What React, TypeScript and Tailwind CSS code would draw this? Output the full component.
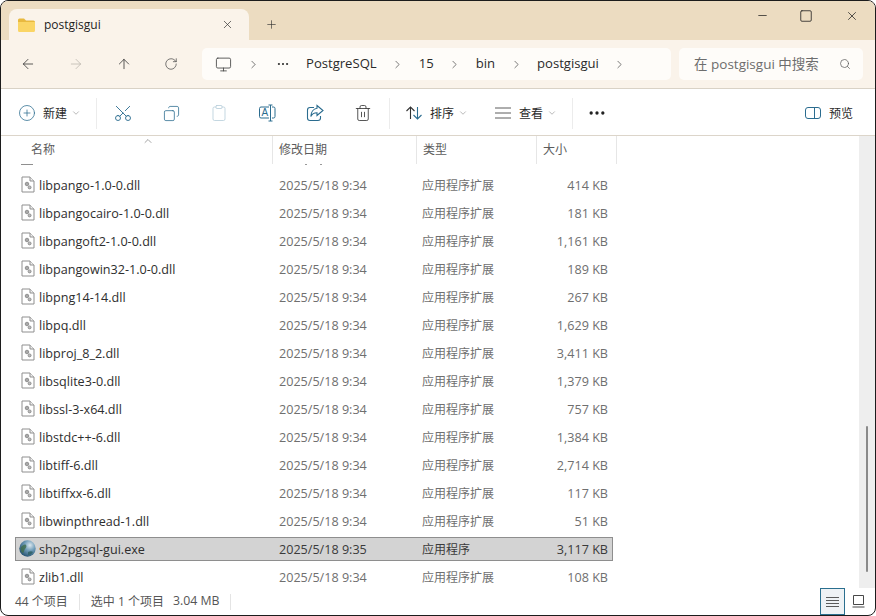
import {
  ArrowLeft,
  ArrowRight,
  ArrowUp,
  ChevronDown,
  ChevronRight,
  ChevronUp,
  CirclePlus,
  Clipboard,
  Copy,
  Ellipsis,
  Minus,
  Monitor,
  Plus,
  RotateCw,
  Scissors,
  Search,
  Square,
  Trash2,
  X,
} from "lucide-react";

const FONT = "font-['Open_Sans','Noto_Sans_CJK_SC',sans-serif]";

type FileRow = { name: string; date: string; type: string; size: string; selected?: boolean };

const d34 = "2025/5/18 9:34";
const ext = "应用程序扩展";

const files: FileRow[] = [
  { name: "libpango-1.0-0.dll", date: d34, type: ext, size: "414 KB" },
  { name: "libpangocairo-1.0-0.dll", date: d34, type: ext, size: "181 KB" },
  { name: "libpangoft2-1.0-0.dll", date: d34, type: ext, size: "1,161 KB" },
  { name: "libpangowin32-1.0-0.dll", date: d34, type: ext, size: "189 KB" },
  { name: "libpng14-14.dll", date: d34, type: ext, size: "267 KB" },
  { name: "libpq.dll", date: d34, type: ext, size: "1,629 KB" },
  { name: "libproj_8_2.dll", date: d34, type: ext, size: "3,411 KB" },
  { name: "libsqlite3-0.dll", date: d34, type: ext, size: "1,379 KB" },
  { name: "libssl-3-x64.dll", date: d34, type: ext, size: "757 KB" },
  { name: "libstdc++-6.dll", date: d34, type: ext, size: "1,384 KB" },
  { name: "libtiff-6.dll", date: d34, type: ext, size: "2,714 KB" },
  { name: "libtiffxx-6.dll", date: d34, type: ext, size: "117 KB" },
  { name: "libwinpthread-1.dll", date: d34, type: ext, size: "51 KB" },
  { name: "shp2pgsql-gui.exe", date: "2025/5/18 9:35", type: "应用程序", size: "3,117 KB", selected: true },
  { name: "zlib1.dll", date: d34, type: ext, size: "108 KB" },
];

function DllIcon() {
  return (
    <svg width="14" height="17" viewBox="0 0 14 17" fill="none" className="shrink-0">
      <path d="M1 1h8l4 4v11H1z" fill="#fff" stroke="#8f8f8f" />
      <path d="M9 1v4h4" fill="#eee" stroke="#8f8f8f" />
      <circle cx="6" cy="8" r="1.8" fill="#a9a9a9" stroke="#777" strokeWidth="0.7" />
      <circle cx="8.6" cy="11.4" r="1.5" fill="#bdbdbd" stroke="#777" strokeWidth="0.7" />
    </svg>
  );
}

function GlobeIcon() {
  return (
    <svg width="17" height="17" viewBox="0 0 17 17" className="shrink-0">
      <defs>
        <radialGradient id="globe" cx="0.65" cy="0.3" r="0.85">
          <stop offset="0" stopColor="#dbe7ee" />
          <stop offset="0.4" stopColor="#6f9cb8" />
          <stop offset="1" stopColor="#123f5f" />
        </radialGradient>
      </defs>
      <circle cx="8.5" cy="8.5" r="8.2" fill="url(#globe)" />
      <path d="M2 7c2-2 4-3 5-2s0 3-1 4-1 4-2 4-3-3-2-6z" fill="#3f6b4a" opacity="0.8" />
      <path d="M9 12c2-1 4-1 5 0-1 2-3 3-5 3z" fill="#2d5f62" opacity="0.8" />
    </svg>
  );
}

function RenameIcon() {
  return (
    <svg width="18" height="18" viewBox="0 0 18 18" fill="none" stroke="#2b6c8f" strokeWidth="1">
      <path d="M11 3H3a1.500 1.500 0 0 0-1.500 1.500v8A1.500 1.500 0 0 0 3 14h8" />
      <path d="M14 3h1.500A1.500 1.500 0 0 1 17 4.500v8a1.500 1.500 0 0 1-1.500 1.500H14" />
      <path d="M10.500 1h4M12.500 1v16M10.500 17h4" />
      <text x="3.500" y="12" fontSize="10" fill="#2b6c8f" stroke="none" fontFamily="Liberation Sans, sans-serif">A</text>
    </svg>
  );
}

function ShareIcon() {
  return (
    <svg width="18" height="18" viewBox="0 0 18 18" fill="none" stroke="#2b6c8f" strokeWidth="1.100">
      <path d="M8 3.500H4A2.500 2.500 0 0 0 1.500 6v8A2.500 2.500 0 0 0 4 16.500h8a2.500 2.500 0 0 0 2.500-2.500v-2" />
      <path d="M11 1.500 17 6.500 11 11.500V8.800C8 8.800 6 10 4.800 12.500 5 8.500 7.200 4.800 11 4.300z" />
    </svg>
  );
}

function PreviewIcon() {
  return (
    <svg width="16" height="14" viewBox="0 0 16 14" fill="none" stroke="#2b6c8f" strokeWidth="1">
      <rect x="0.500" y="1.500" width="15" height="11" rx="2.500" />
      <path d="M9.500 1.500v11" />
    </svg>
  );
}

function SortIcon() {
  return (
    <svg width="18" height="16" viewBox="0 0 18 16" fill="none" strokeWidth="1.100">
      <path d="M5.500 14V2M1.500 6l4-4 4 4" stroke="#333" />
      <path d="M12.500 2v12M8.500 10l4 4 4-4" stroke="#2b6c8f" />
    </svg>
  );
}

function ToolIcon({ children }: { children: React.ReactNode }) {
  return <div className="flex w-[48px] items-center justify-center">{children}</div>;
}

function Crumb({ label }: { label: string }) {
  return (
    <>
      <span className="text-[13.100px] text-[#2a2a2a]">{label}</span>
      <ChevronRight className="mx-[14.500px] h-[13px] w-[13px] text-[#444]" strokeWidth={1.3} />
    </>
  );
}

function Header({ label, width, pad }: { label: string; width: string; pad: string }) {
  return (
    <div className={`flex h-[28px] items-center border-r border-[#e6e6e6] text-[12px] text-[#5c5c5c] ${width} ${pad}`}>
      {label}
    </div>
  );
}

function Row({ file }: { file: FileRow }) {
  const meta = file.selected ? "text-[#3a3a3a]" : "text-[#6f6f6f]";
  return (
    <div
      className={`mb-[4px] flex h-[24px] w-[598px] items-center border pl-[3px] text-[12.600px] ${
        file.selected ? "border-[#8e8e8e] bg-[#d3d3d3]" : "border-transparent"
      }`}
    >
      <div className="flex w-[260px] items-center">
        {file.selected ? (
          <div className="flex w-[20px] justify-start">
            <GlobeIcon />
          </div>
        ) : (
          <div className="flex w-[20px] pl-[2px]">
            <DllIcon />
          </div>
        )}
        <span className="mt-[2px] text-[#2e2e2e]">{file.name}</span>
      </div>
      <span className={`mt-[2px] w-[143px] ${meta}`}>{file.date}</span>
      <span className={`mt-[2px] w-[120px] text-[12px] ${meta}`}>{file.type}</span>
      <span className={`mt-[2px] w-[66px] text-right ${meta}`}>{file.size}</span>
    </div>
  );
}

export default function App() {
  return (
    <div className={`${FONT} flex h-[616px] w-[876px] flex-col overflow-hidden rounded-[8px] border border-[#1c1c1c] bg-white`}>
      {/* title bar */}
      <div className="flex h-[39px] shrink-0 items-end bg-[#ecdcc1] pl-[8px]">
        <div className="flex h-[31px] w-[240px] items-center rounded-t-[8px] bg-[#faf3ea] pl-[9px] pr-[15px]">
          <svg width="17" height="14" viewBox="0 0 17 14" className="shrink-0">
            <path d="M0 2a1.500 1.500 0 0 1 1.500-1.500h4.500L8 2.500h7.500A1.500 1.500 0 0 1 17 4v1H0z" fill="#e8b93f" />
            <path d="M0 4h17v8.500a1.500 1.500 0 0 1-1.500 1.500h-14A1.500 1.500 0 0 1 0 12.500z" fill="#fad565" />
          </svg>
          <span className="ml-[9px] text-[12px] font-medium text-[#1e1e1e]">postgisgui</span>
          <X className="ml-auto h-[13px] w-[13px] text-[#333]" strokeWidth={1.3} />
        </div>
        <div className="flex h-[31px] items-center pl-[16px]">
          <Plus className="h-[13px] w-[13px] text-[#333]" strokeWidth={1.2} />
        </div>
        <div className="ml-auto flex h-[39px] items-start pr-[16px] pt-[8px]">
          <Minus className="mr-[30px] h-[13px] w-[13px] text-[#222]" strokeWidth={1.4} />
          <Square className="mr-[32px] h-[14px] w-[14px] text-[#222]" strokeWidth={1.4} />
          <X className="h-[14px] w-[14px] text-[#222]" strokeWidth={1.3} />
        </div>
      </div>

      {/* nav + address bar */}
      <div className="flex h-[49px] shrink-0 items-center border-b border-[#d9d2c6] bg-[#faf3ea] pl-[19px] pr-[12px]">
        <ArrowLeft className="h-[16px] w-[16px] text-[#333]" strokeWidth={1.2} />
        <ArrowRight className="ml-[32px] h-[16px] w-[16px] text-[#bdb8b0]" strokeWidth={1.2} />
        <ArrowUp className="ml-[32px] h-[16px] w-[16px] text-[#333]" strokeWidth={1.2} />
        <RotateCw className="ml-[32px] h-[14px] w-[14px] text-[#444]" strokeWidth={1.2} />
        <div className="ml-[24px] flex h-[32px] w-[469px] items-center rounded-[5px] bg-[#fefcf9] pl-[13px]">
          <Monitor className="h-[17px] w-[17px] text-[#444]" strokeWidth={1.2} />
          <ChevronRight className="ml-[15px] mr-[16px] h-[13px] w-[13px] text-[#444]" strokeWidth={1.3} />
          <Ellipsis className="mr-[16px] h-[14px] w-[14px] text-[#333]" strokeWidth={1.8} />
          <Crumb label="PostgreSQL" />
          <Crumb label="15" />
          <Crumb label="bin" />
          <Crumb label="postgisgui" />
        </div>
        <div className="ml-[8px] flex h-[32px] w-[184px] items-center rounded-[5px] bg-[#fefcf9] pl-[15px]">
          <span className="text-[13.500px] text-[#6d6d6d]">在 postgisgui 中搜索</span>
          <Search className="ml-auto mr-[12px] h-[12px] w-[12px] text-[#555]" strokeWidth={1.4} />
        </div>
      </div>

      {/* toolbar */}
      <div className="flex h-[47px] shrink-0 items-center border-b border-[#dcd5ca] pl-[17px] pr-[22px] pt-[2px] text-[12px] text-[#2a2a2a]">
        <CirclePlus className="h-[18px] w-[18px] text-[#2b6c8f]" strokeWidth={1} />
        <span className="ml-[7px] mt-[2px]">新建</span>
        <ChevronDown className="ml-[4px] h-[10px] w-[10px] text-[#888]" strokeWidth={1.4} />
        <div className="ml-[15px] mr-[2px] h-[31px] w-px bg-[#ececec]" />
        <ToolIcon>
          <Scissors className="h-[20px] w-[20px] -rotate-90 text-[#2b6c8f]" strokeWidth={1.1} />
        </ToolIcon>
        <ToolIcon>
          <Copy className="h-[17px] w-[17px] -scale-x-100 text-[#2b6c8f]" strokeWidth={1.1} />
        </ToolIcon>
        <ToolIcon>
          <Clipboard className="h-[18px] w-[18px] text-[#b7cfdb]" strokeWidth={1.1} />
        </ToolIcon>
        <ToolIcon>
          <RenameIcon />
        </ToolIcon>
        <ToolIcon>
          <ShareIcon />
        </ToolIcon>
        <ToolIcon>
          <Trash2 className="h-[18px] w-[18px] text-[#333]" strokeWidth={1.1} />
        </ToolIcon>
        <div className="ml-[2px] mr-[15px] h-[31px] w-px bg-[#ececec]" />
        <SortIcon />
        <span className="ml-[7px] mt-[2px]">排序</span>
        <ChevronDown className="ml-[4px] h-[10px] w-[10px] text-[#888]" strokeWidth={1.4} />
        <svg width="16" height="12" viewBox="0 0 16 12" fill="none" stroke="#333" strokeWidth="0.8" className="ml-[27px]">
          <path d="M0 1h16M0 6h16M0 11h16" />
        </svg>
        <span className="ml-[8px] mt-[2px]">查看</span>
        <ChevronDown className="ml-[4px] h-[10px] w-[10px] text-[#888]" strokeWidth={1.4} />
        <div className="ml-[15px] mr-[14px] h-[31px] w-px bg-[#ececec]" />
        <Ellipsis className="h-[20px] w-[20px] text-[#222]" strokeWidth={2} />
        <div className="ml-auto flex items-center">
          <PreviewIcon />
          <span className="ml-[8px] mt-[2px]">预览</span>
        </div>
      </div>

      {/* file list + scrollbar */}
      <div className="flex min-h-0 flex-1">
        <div className="flex min-w-0 flex-1 flex-col">
          <div className="relative flex h-[28px] shrink-0">
            <Header label="名称" width="w-[272px]" pad="pl-[30px]" />
            <Header label="修改日期" width="w-[144px]" pad="pl-[6px]" />
            <Header label="类型" width="w-[120px]" pad="pl-[6px]" />
            <Header label="大小" width="w-[80px]" pad="pl-[6px]" />
            <ChevronUp className="absolute left-[141px] top-[-1px] h-[12px] w-[12px] text-[#666]" strokeWidth={1.2} />
          </div>
          <div className="min-h-0 flex-1 overflow-hidden pl-[14px]">
            {/* bottom edge of the row scrolled out of view */}
            <div className="mb-[8px] flex h-px items-center pl-[6px]">
              <div className="h-px w-[12px] bg-[#8f8f8f]" />
              <div className="ml-[272px] h-px w-[2px] bg-[#999]" />
              <div className="ml-[13px] h-px w-[2px] bg-[#999]" />
            </div>
            {files.map((file) => (
              <Row key={file.name} file={file} />
            ))}
          </div>
        </div>
        <div className="flex w-[16px] shrink-0 justify-center bg-[#eeeeee] pt-[290px]">
          <div className="h-[146px] w-[2px] rounded-full bg-[#8a8a8a]" />
        </div>
      </div>

      {/* status bar */}
      <div className="flex h-[27px] shrink-0 items-center pl-[14px] text-[12px] text-[#555]">
        <span>44 个项目</span>
        <div className="mx-[11px] h-[16px] w-px bg-[#e4e4e4]" />
        <span>选中 1 个项目</span>
        <span className="ml-[9px] text-[12.300px]">3.04 MB</span>
        <div className="ml-[11px] h-[16px] w-px bg-[#e4e4e4]" />
        <div className="ml-auto flex h-full items-center pr-[10px]">
          <div className="flex h-full w-[25px] items-center justify-center border border-[#2a6f8f] bg-[#eef2f5]">
            <svg width="13" height="10" viewBox="0 0 13 10" fill="none" stroke="#333" strokeWidth="0.8">
              <path d="M0 .5h13M0 3.500h13M0 6.500h13M0 9.500h13" />
            </svg>
          </div>
          <svg width="13" height="13" viewBox="0 0 13 13" fill="none" stroke="#333" strokeWidth="0.9" className="ml-[7px]">
            <path d="M1.500.5h10v9h-10zM.5 12h12" />
          </svg>
        </div>
      </div>
    </div>
  );
}
